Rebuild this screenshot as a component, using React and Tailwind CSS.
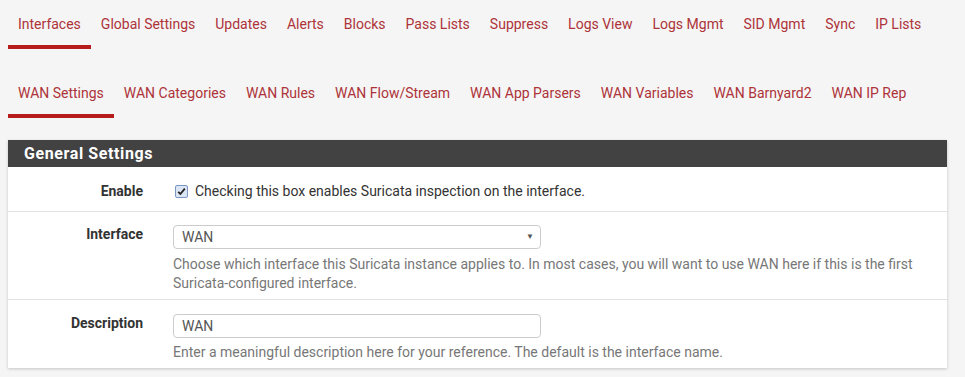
import React from 'react';

const TOP_TABS = ['Interfaces', 'Global Settings', 'Updates', 'Alerts', 'Blocks', 'Pass Lists', 'Suppress', 'Logs View', 'Logs Mgmt', 'SID Mgmt', 'Sync', 'IP Lists'];
const SUB_TABS = ['WAN Settings', 'WAN Categories', 'WAN Rules', 'WAN Flow/Stream', 'WAN App Parsers', 'WAN Variables', 'WAN Barnyard2', 'WAN IP Rep'];

/* ── tab strip ── */
function TabRow({ tabs, active, className = '' }) {
  return (
    <ul className={`flex ${className}`}>
      {tabs.map((t) => (
        <li
          key={t}
          className={`px-[10px] pt-[6px] pb-[11px] text-[14px] leading-[20px] text-[#ad3339] border-b-4 whitespace-nowrap ${
            t === active ? 'border-[#b71c1c]' : 'border-transparent'
          }`}
        >
          {t}
        </li>
      ))}
    </ul>
  );
}

/* ── one form row ── */
function Row({ label, labelPad, children, last }) {
  return (
    <div className={`flex ${last ? '' : 'border-b border-[#e2e2e2]'}`}>
      <div className={`w-[150px] shrink-0 pr-[15px] text-right font-bold text-[14px] leading-[20px] text-[#333] ${labelPad}`}>
        {label}
      </div>
      <div className="flex-1 pl-[15px] pr-[15px]">{children}</div>
    </div>
  );
}

export default function App() {
  return (
    <div className="w-[965px] h-[377px] bg-[#f5f5f5] overflow-hidden pl-[8px] pr-[18px]" style={{ fontFamily: 'Roboto, "Liberation Sans", sans-serif' }}>
      <TabRow tabs={TOP_TABS} active="Interfaces" className="mt-[8px]" />
      <TabRow tabs={SUB_TABS} active="WAN Settings" className="mt-[28px]" />

      {/* General Settings panel */}
      <div className="mt-[22px] bg-white shadow-[0_1px_3px_rgba(0,0,0,0.2)]">
        <div className="h-[27px] bg-[#424242] text-white font-bold text-[16px] leading-[27px] px-[16px] tracking-[0.6px]">
          General Settings
        </div>

        <Row label="Enable" labelPad="pt-[14px]">
          <label className="flex items-center gap-[7px] text-[14px] leading-[20px] text-[#333] pt-[14px] pb-[10px]">
            <span className="w-[13px] h-[13px] border border-[#7a96c2] bg-[#dbe5f3] rounded-[2px] flex items-center justify-center ml-[2px]">
              <svg width="9" height="9" viewBox="0 0 9 9">
                <path d="M1.2 4.8 L3.4 7 L7.8 1.6" fill="none" stroke="#222" strokeWidth="1.8" />
              </svg>
            </span>
            Checking this box enables Suricata inspection on the interface.
          </label>
        </Row>

        <Row label="Interface" labelPad="pt-[12px]">
          <div className="pt-[13px] pb-[6px]">
            <div className="w-[368px] h-[24px] border border-[#ccc] rounded-[4px] flex items-center justify-between pl-[8px] pr-[6px] text-[14px] text-[#555]">
              <span>WAN</span>
              <span className="text-[8px] text-[#555]">▼</span>
            </div>
            <p className="mt-[6px] text-[14px] leading-[19px] text-[#777]">
              Choose which interface this Suricata instance applies to. In most cases, you will want to use WAN here if this is the first Suricata-configured interface.
            </p>
          </div>
        </Row>

        <Row label="Description" labelPad="pt-[13px]" last>
          <div className="pt-[14px] pb-[6px]">
            <div className="w-[368px] h-[24px] border border-[#ccc] rounded-[4px] flex items-center px-[8px] text-[14px] text-[#555]">
              WAN
            </div>
            <p className="mt-[5px] text-[14px] leading-[19px] text-[#777]">
              Enter a meaningful description here for your reference. The default is the interface name.
            </p>
          </div>
        </Row>
      </div>
    </div>
  );
}
